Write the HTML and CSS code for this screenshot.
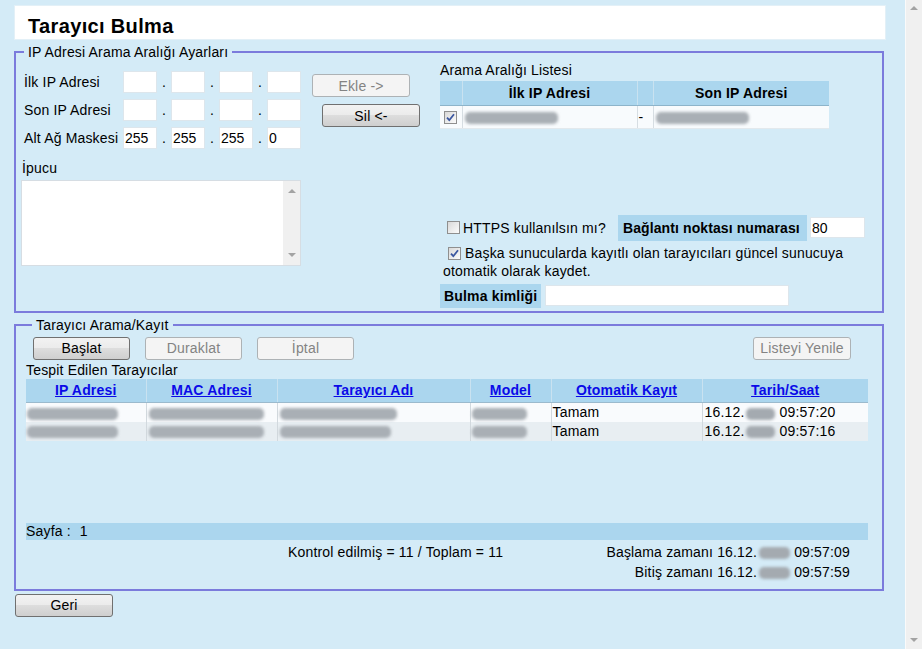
FILE: index.html
```html
<!DOCTYPE html>
<html lang="tr">
<head>
<meta charset="utf-8">
<title>Tarayıcı Bulma</title>
<link rel="stylesheet" href="styles.css">
</head>
<body>
<div class="page">
  <main class="main">
    <header class="titlebar"><h1 class="title">Tarayıcı Bulma</h1></header>

    <fieldset class="box box-range">
      <legend class="legend legend-range">IP Adresi Arama Aralığı Ayarları</legend>
      <div class="range-layout">
        <div class="range-left">
          <div class="ip-area">
            <div class="ip-grid">
              <span class="ip-label">İlk IP Adresi</span>
              <input class="ip-input" type="text" value=""><span class="dot">.</span>
              <input class="ip-input" type="text" value=""><span class="dot">.</span>
              <input class="ip-input" type="text" value=""><span class="dot">.</span>
              <input class="ip-input" type="text" value="">
              <span class="ip-label">Son IP Adresi</span>
              <input class="ip-input" type="text" value=""><span class="dot">.</span>
              <input class="ip-input" type="text" value=""><span class="dot">.</span>
              <input class="ip-input" type="text" value=""><span class="dot">.</span>
              <input class="ip-input" type="text" value="">
              <span class="ip-label">Alt Ağ Maskesi</span>
              <input class="ip-input" type="text" value="255"><span class="dot">.</span>
              <input class="ip-input" type="text" value="255"><span class="dot">.</span>
              <input class="ip-input" type="text" value="255"><span class="dot">.</span>
              <input class="ip-input" type="text" value="0">
            </div>
            <div class="range-buttons">
              <button class="btn btn-disabled" type="button">Ekle -&gt;</button>
              <button class="btn btn-del" type="button">Sil &lt;-</button>
            </div>
          </div>
          <div class="hint">
            <div class="hint-label">İpucu</div>
            <div class="hint-area">
              <div class="hint-text"></div>
              <div class="mini-scroll"><span class="arrow-up"></span><span class="arrow-down"></span></div>
            </div>
          </div>
        </div>

        <div class="range-right">
          <div class="list-title">Arama Aralığı Listesi</div>
          <table class="range-table">
            <colgroup><col class="rc1"><col class="rc2"><col class="rc3"><col class="rc4"></colgroup>
            <thead>
              <tr><th></th><th>İlk IP Adresi</th><th></th><th>Son IP Adresi</th></tr>
            </thead>
            <tbody>
              <tr>
                <td class="cb-cell"><span class="cb cb-checked"><svg width="11" height="11" viewBox="0 0 11 11"><path d="M2 5.6 L4.3 8.2 L9 2.2" fill="none" stroke="#3b57a0" stroke-width="1.8"/></svg></span></td>
                <td><span class="blur blur-range"></span></td>
                <td class="dash">-</td>
                <td><span class="blur blur-range"></span></td>
              </tr>
            </tbody>
          </table>

          <div class="options">
            <div class="https-row">
              <span class="cb"></span>
              <span class="https-text">HTTPS kullanılsın mı?</span>
              <span class="field-label port-label">Bağlantı noktası numarası</span>
              <input class="text-input port-input" type="text" value="80">
            </div>
            <p class="auto-reg"><span class="cb cb-checked cb-inline"><svg width="11" height="11" viewBox="0 0 11 11"><path d="M2 5.6 L4.3 8.2 L9 2.2" fill="none" stroke="#3b57a0" stroke-width="1.8"/></svg></span>Başka sunucularda kayıtlı olan tarayıcıları güncel sunucuya<br>otomatik olarak kaydet.</p>
            <div class="id-row">
              <span class="field-label id-label">Bulma kimliği</span>
              <input class="text-input id-input" type="text" value="">
            </div>
          </div>
        </div>
      </div>
    </fieldset>

    <fieldset class="box box-scan">
      <legend class="legend legend-scan">Tarayıcı Arama/Kayıt</legend>
      <div class="toolbar">
        <button class="btn btn-tool" type="button">Başlat</button>
        <button class="btn btn-tool btn-disabled" type="button">Duraklat</button>
        <button class="btn btn-tool btn-disabled" type="button">İptal</button>
        <button class="btn btn-refresh btn-disabled" type="button">Listeyi Yenile</button>
      </div>
      <div class="found-label">Tespit Edilen Tarayıcılar</div>
      <div class="results">
        <table class="scan-table">
          <colgroup><col class="sc1"><col class="sc2"><col class="sc3"><col class="sc4"><col class="sc5"><col class="sc6"></colgroup>
          <thead>
            <tr>
              <th><a href="#">IP Adresi</a></th>
              <th><a href="#">MAC Adresi</a></th>
              <th><a href="#">Tarayıcı Adı</a></th>
              <th><a href="#">Model</a></th>
              <th><a href="#">Otomatik Kayıt</a></th>
              <th><a href="#">Tarih/Saat</a></th>
            </tr>
          </thead>
          <tbody>
            <tr class="row-a">
              <td><span class="blur blur-ip"></span></td>
              <td><span class="blur blur-mac"></span></td>
              <td><span class="blur blur-name"></span></td>
              <td><span class="blur blur-model"></span></td>
              <td>Tamam</td>
              <td>16.12.<span class="blur blur-date"></span> 09:57:20</td>
            </tr>
            <tr class="row-b">
              <td><span class="blur blur-ip"></span></td>
              <td><span class="blur blur-mac"></span></td>
              <td><span class="blur blur-name2"></span></td>
              <td><span class="blur blur-model"></span></td>
              <td>Tamam</td>
              <td>16.12.<span class="blur blur-date"></span> 09:57:16</td>
            </tr>
          </tbody>
        </table>
      </div>
      <div class="pager">Sayfa :<span class="page-no">1</span></div>
      <div class="stats">
        <div class="stats-left">Kontrol edilmiş = 11 / Toplam = 11</div>
        <div class="stats-right">
          <div>Başlama zamanı 16.12.<span class="blur blur-stat"></span> 09:57:09</div>
          <div>Bitiş zamanı 16.12.<span class="blur blur-stat"></span> 09:57:59</div>
        </div>
      </div>
    </fieldset>

    <button class="btn btn-back" type="button">Geri</button>
  </main>
  <div class="scrollbar"><span class="arrow-up"></span><span class="arrow-down"></span></div>
</div>
</body>
</html>
```

FILE: styles.css
```css
* { box-sizing: border-box; }
html, body { margin: 0; height: 100%; }
body {
  background: #d4ebf7;
  font-family: "Liberation Sans", Arial, sans-serif;
  font-size: 14px;
  letter-spacing: 0.17px;
  color: #000;
  overflow: hidden;
}
.page { display: flex; height: 649px; }
.main { width: 905px; padding: 5px 0 0 14px; }

.scrollbar {
  width: 17px;
  background: #f0f0f0;
  border-left: 1px solid #fafafa;
  display: flex;
  flex-direction: column;
  justify-content: space-between;
  align-items: center;
  padding: 6px 0 7px;
}
.arrow-up, .arrow-down {
  display: block;
  width: 0; height: 0;
  border-left: 4px solid transparent;
  border-right: 4px solid transparent;
}
.arrow-up { border-bottom: 4px solid #a3a3a3; }
.arrow-down { border-top: 4px solid #a3a3a3; }

.titlebar {
  width: 872px;
  height: 35px;
  background: #fff;
  border: 1px solid #e3f0f7;
  padding: 9px 0 0 13px;
}
.title { margin: 0; font-size: 20px; font-weight: bold; line-height: 23px; letter-spacing: 0.35px; }

.box {
  margin: 4px 0 0;
  padding: 0;
  border: 2px solid #7b7bdc;
  width: 870px;
  min-width: 0;
}
.box-range { padding-bottom: 3px; }
.box-scan { margin-top: 4px; padding-bottom: 1px; }
.legend { padding: 0 4px; line-height: 16px; font-size: 14px; }
.legend-range { margin-left: 8px; }
.legend-scan { margin-left: 16px; }

.range-layout { display: flex; }
.range-left { width: 424px; padding-left: 5px; }
.ip-area { display: flex; margin: 11px 0 0 3px; }
.ip-grid {
  display: grid;
  grid-template-columns: 99px 34px 14px 34px 14px 34px 14px 34px;
  grid-auto-rows: 22px;
  row-gap: 6px;
  align-items: center;
}
.ip-label { line-height: 22px; white-space: nowrap; }
.dot { text-align: center; line-height: 22px; }
.ip-input, .text-input {
  width: 34px;
  height: 22px;
  margin: 0;
  border: 1px solid #dde6ec;
  background: #fff;
  padding: 0 1px;
  font: 14px "Liberation Sans", Arial, sans-serif;
  color: #000;
  outline: none;
}
.range-buttons {
  display: flex;
  flex-direction: column;
  align-items: flex-start;
  margin-left: 11px;
  padding-top: 3px;
}
.btn {
  width: 98px;
  height: 23px;
  padding: 0;
  font: 14px "Liberation Sans", Arial, sans-serif;
  letter-spacing: 0.17px;
  color: #000;
  border: 1px solid #707070;
  border-radius: 3px;
  background: linear-gradient(#f2f2f2 0%, #ebebeb 50%, #dddddd 50%, #cfcfcf 100%);
}
.btn-disabled {
  color: #838383;
  border-color: #adb2b5;
  background: #f4f4f4;
}
.btn-del { margin: 7px 0 0 10px; }

.hint { margin-top: 11px; }
.hint-label { line-height: 16px; padding-left: 1px; }
.hint-area {
  margin-top: 4px;
  width: 280px;
  height: 86px;
  display: flex;
  background: #fff;
  border: 1px solid #d6dde3;
}
.hint-text { flex: 1; }
.mini-scroll {
  width: 17px;
  background: #f0f0f0;
  display: flex;
  flex-direction: column;
  justify-content: space-between;
  align-items: center;
  padding: 8px 0 8px;
}

.range-right { width: 442px; padding-top: 2px; }
.list-title { line-height: 16px; }
.range-table {
  margin-top: 3px;
  width: 389px;
  table-layout: fixed;
  border-collapse: collapse;
}
.rc1 { width: 22px; }
.rc2 { width: 175px; }
.rc3 { width: 16px; }
.rc4 { width: 176px; }
.range-table th {
  height: 24px;
  padding: 0;
  background: #abd6ee;
  border-bottom: 1px solid #8db4ca;
  border-left: 1px solid #c9e2f0;
  font-weight: bold;
  text-align: center;
}
.range-table th:first-child, .range-table td:first-child { border-left: none; }
.range-table td {
  height: 23px;
  padding: 0 0 0 1px;
  background: #f8fbfd;
  border-left: 1px solid #d7dee3;
  border-bottom: 1px solid #e3e9ed;
  vertical-align: middle;
  white-space: nowrap;
}
.range-table td.cb-cell { padding-left: 4px; }
.range-table td.dash { padding-left: 1px; }

.cb {
  display: inline-block;
  width: 13px;
  height: 13px;
  border: 1px solid #8f8f8f;
  background: linear-gradient(135deg, #d9d9d9, #fbfbfb);
  vertical-align: middle;
  flex: none;
}
.cb svg { display: block; margin: 0; }

.blur {
  display: inline-block;
  height: 12px;
  background: #a9afb5;
  border-radius: 5px;
  filter: blur(1.8px);
  vertical-align: middle;
}
.blur-range { width: 93px; margin-left: 1px; }

.options { margin-top: 86px; }
.https-row { display: flex; align-items: center; height: 26px; }
.https-row .cb { margin-left: 7px; }
.https-text { margin-left: 3px; width: 155px; white-space: nowrap; }
.field-label {
  background: #abd6ee;
  font-weight: bold;
  white-space: nowrap;
}
.port-label { width: 189px; height: 26px; line-height: 26px; padding-left: 5px; letter-spacing: 0.1px; }
.port-input { margin-left: 3px; width: 55px; height: 21px; }
.auto-reg { margin: 3px 0 0; padding-left: 3px; line-height: 18px; }
.cb-inline { margin: 0 4px 0 5px; vertical-align: -2px; }
.id-row { display: flex; align-items: flex-start; margin-top: 4px; }
.id-label { width: 101px; height: 24px; line-height: 24px; padding-left: 4px; }
.id-input { margin: 1px 0 0 4px; width: 244px; height: 21px; }

.toolbar {
  display: flex;
  gap: 15px;
  margin-top: 4px;
  padding: 0 31px 0 17px;
}
.btn-tool { width: 97px; }
.btn-refresh { margin-left: auto; }
.found-label { margin-top: 2px; padding-left: 10px; line-height: 16px; }
.results { margin: 1px 14px 0 10px; height: 144px; }
.scan-table { width: 842px; table-layout: fixed; border-collapse: collapse; }
.sc1 { width: 120px; }
.sc2 { width: 131px; }
.sc3 { width: 193px; }
.sc4 { width: 81px; }
.sc5 { width: 151px; }
.sc6 { width: 166px; }
.scan-table th {
  height: 24px;
  padding: 0;
  background: #abd6ee;
  border-bottom: 1px solid #9bbacd;
  border-left: 1px solid #c9e2f0;
  text-align: center;
  font-weight: bold;
}
.scan-table th a { color: #0a0ae8; text-decoration: underline; }
.scan-table th:first-child, .scan-table td:first-child { border-left: none; }
.scan-table td {
  height: 19px;
  padding: 0 0 0 1px;
  border-left: 1px solid #d2d9de;
  white-space: nowrap;
  vertical-align: middle;
  line-height: 18px;
}
.scan-table td:last-child { padding-left: 2px; }
.row-a td { background: #f9fbfd; }
.row-b td { background: #e8eef2; }
.blur-ip { width: 91px; }
.blur-mac { width: 115px; margin-left: 1px; }
.blur-name { width: 117px; margin-left: 1px; }
.blur-name2 { width: 111px; margin-left: 1px; }
.blur-model { width: 55px; }
.blur-date { width: 29px; margin-left: 2px; background: #a4aab0; }
.blur-stat { width: 31px; margin-left: 2px; background: #a4aab0; }

.pager {
  margin: 0 14px 0 10px;
  height: 17px;
  line-height: 17px;
  background: #abd6ee;
}
.page-no { margin-left: 9px; }
.stats {
  display: flex;
  justify-content: space-between;
  margin: 2px 14px 0 10px;
  padding-bottom: 6px;
  line-height: 20px;
}
.stats-left { padding-left: 262px; }
.stats-right { text-align: right; padding-right: 18px; }

.btn-back { margin: 3px 0 0 1px; display: block; }
```
